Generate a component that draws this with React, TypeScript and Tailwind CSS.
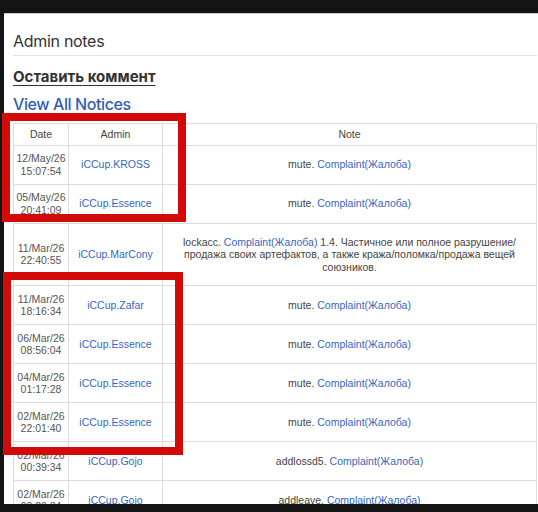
import React from "react";

type Row = { d: string; t: string; admin: string; action: string; extra?: string[] };

const rows: Row[] = [
  { d: "12/May/26", t: "15:07:54", admin: "iCCup.KROSS", action: "mute." },
  { d: "05/May/26", t: "20:41:09", admin: "iCCup.Essence", action: "mute." },
  {
    d: "11/Mar/26",
    t: "22:40:55",
    admin: "iCCup.MarCony",
    action: "lockacc.",
    extra: [
      " 1.4. Частичное или полное разрушение/",
      "продажа своих артефактов, а также кража/поломка/продажа вещей",
      "союзников.",
    ],
  },
  { d: "11/Mar/26", t: "18:16:34", admin: "iCCup.Zafar", action: "mute." },
  { d: "06/Mar/26", t: "08:56:04", admin: "iCCup.Essence", action: "mute." },
  { d: "04/Mar/26", t: "01:17:28", admin: "iCCup.Essence", action: "mute." },
  { d: "02/Mar/26", t: "22:01:40", admin: "iCCup.Essence", action: "mute." },
  { d: "02/Mar/26", t: "00:39:34", admin: "iCCup.Gojo", action: "addlossd5." },
  { d: "02/Mar/26", t: "00:20:34", admin: "iCCup.Gojo", action: "addleave." },
];

export default function App() {
  return (
    <div className="relative h-[512px] w-[538px] overflow-hidden bg-[#141414] pt-[13px] pl-[4px]">
      <div className="h-[491px] overflow-hidden border-t border-[#c8c8c8] bg-white pl-[9px] pr-[1px]">
        <div className="mt-[17px] text-[16px] leading-[20px] tracking-[-0.3px] text-[#333] [font-family:Inter,'Noto_Sans',sans-serif]">
          Admin notes
        </div>
        <div className="mt-[4px] h-px bg-[#e2e2e2]" />
        <div className="mt-[11px] text-[15px] font-bold leading-[20px] text-[#333] underline underline-offset-[3px] [font-family:Inter,'Noto_Sans',sans-serif]">
          Оставить коммент
        </div>
        <div className="mt-[6px] text-[16px] font-medium leading-[22px] tracking-[-0.4px] text-[#2f5fb3] underline underline-offset-[3px] [font-family:Inter,'Noto_Sans',sans-serif]">
          View All Notices
        </div>
        <table className="mt-[8px] w-full table-fixed border-collapse text-center text-[10.5px] leading-[12.5px] text-[#555] [font-family:'Liberation_Sans',Arial,sans-serif]">
          <colgroup>
            <col className="w-[55px]" />
            <col className="w-[94px]" />
            <col />
          </colgroup>
          <thead>
            <tr>
              <th className="border border-[#dcdcdc] py-[4px] font-normal text-[#444]">Date</th>
              <th className="border border-[#dcdcdc] py-[4px] font-normal text-[#444]">Admin</th>
              <th className="border border-[#dcdcdc] py-[4px] font-normal text-[#444]">Note</th>
            </tr>
          </thead>
          <tbody>
            {rows.map((r, i) => (
              <tr key={i}>
                <td className="border border-[#dcdcdc] py-[6.5px] align-middle">
                  {r.d}
                  <br />
                  {r.t}
                </td>
                <td className="border border-[#dcdcdc] py-[6.5px] align-middle text-[#3467c1]">
                  {r.admin}
                </td>
                <td
                  className={
                    r.extra
                      ? "border border-[#dcdcdc] py-[12px] align-middle text-[#444]"
                      : "border border-[#dcdcdc] py-[6.5px] align-middle text-[#444]"
                  }
                >
                  {r.action} <span className="text-[#3467c1]">Complaint(Жалоба)</span>
                  {r.extra ? (
                    <>
                      {r.extra[0]}
                      <br />
                      {r.extra[1]}
                      <br />
                      {r.extra[2]}
                    </>
                  ) : null}
                </td>
              </tr>
            ))}
          </tbody>
        </table>
      </div>
      <div className="absolute left-[2px] top-[113px] h-[109px] w-[184px] border-[8px] border-[#d20a0a]" />
      <div className="absolute left-[3px] top-[272px] h-[183px] w-[180px] border-[8px] border-[#d20a0a]" />
    </div>
  );
}
